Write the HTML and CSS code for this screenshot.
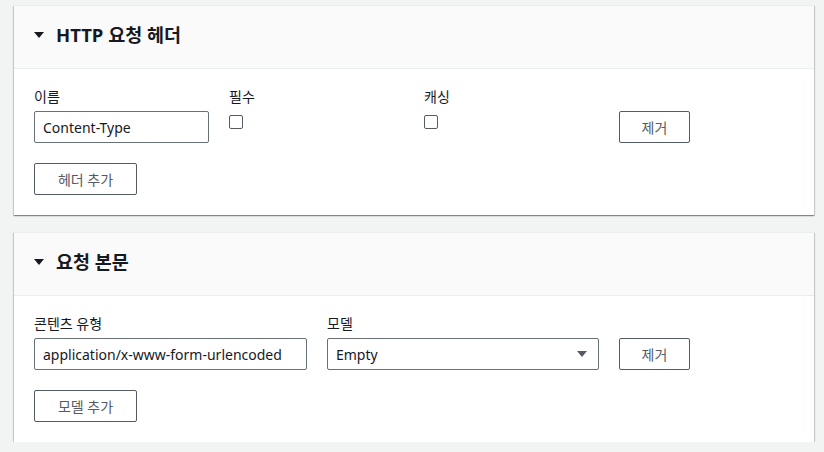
FILE: index.html
```html
<!DOCTYPE html>
<html lang="ko">
<head>
<meta charset="utf-8">
<title>요청 설정</title>
<link rel="stylesheet" href="styles.css">
</head>
<body>
<div class="page">
  <section class="card">
    <div class="card-header">
      <span class="caret"></span>
      <h2 class="card-title">HTTP 요청 헤더</h2>
    </div>
    <div class="card-body">
      <div class="row row-headers">
        <div class="field">
          <label class="label">이름</label>
          <div class="input">Content-Type</div>
        </div>
        <div class="field">
          <label class="label">필수</label>
          <span class="checkbox"></span>
        </div>
        <div class="field">
          <label class="label">캐싱</label>
          <span class="checkbox"></span>
        </div>
        <div class="field field-end">
          <button class="btn btn-remove">제거</button>
        </div>
      </div>
      <div class="actions">
        <button class="btn btn-add">헤더 추가</button>
      </div>
    </div>
  </section>

  <section class="card">
    <div class="card-header">
      <span class="caret"></span>
      <h2 class="card-title">요청 본문</h2>
    </div>
    <div class="card-body">
      <div class="row row-body">
        <div class="field">
          <label class="label">콘텐츠 유형</label>
          <div class="input">application/x-www-form-urlencoded</div>
        </div>
        <div class="field">
          <label class="label">모델</label>
          <div class="input select">
            <span>Empty</span>
            <span class="select-arrow"></span>
          </div>
        </div>
        <div class="field field-end">
          <button class="btn btn-remove">제거</button>
        </div>
      </div>
      <div class="actions">
        <button class="btn btn-add">모델 추가</button>
      </div>
    </div>
  </section>
</div>
</body>
</html>
```

FILE: styles.css
```css
* { box-sizing: border-box; }

html, body {
  margin: 0;
  padding: 0;
  background: #f2f3f3;
}

body {
  font-family: "Noto Sans", "Noto Sans CJK KR", sans-serif;
  font-size: 14px;
  color: #16191f;
}

.page {
  display: flex;
  flex-direction: column;
  gap: 17px;
  padding: 5px 0 0 14px;
  width: 814px;
}

.card {
  background: #ffffff;
  border-top: 1px solid #eaeded;
  box-shadow: 0 1px 1px 0 rgba(0, 28, 36, 0.3),
              1px 1px 1px 0 rgba(0, 28, 36, 0.15),
              -1px 1px 1px 0 rgba(0, 28, 36, 0.15);
}

.card-header {
  display: flex;
  align-items: center;
  gap: 12px;
  background: #fafafa;
  border-bottom: 1px solid #eaeded;
  padding: 15px 20px 20px;
  height: 63px;
}

.caret {
  width: 0;
  height: 0;
  border-left: 5px solid transparent;
  border-right: 5px solid transparent;
  border-top: 6px solid #16191f;
}

.card-title {
  margin: 0;
  font-size: 18.5px;
  font-weight: 700;
  line-height: 26px;
  color: #16191f;
}

.card-body {
  padding: 20px;
  display: flex;
  flex-direction: column;
  gap: 20px;
}

.row {
  display: grid;
  column-gap: 20px;
}

.row-headers { grid-template-columns: 175px 175px 175px 71px; }
.row-body { grid-template-columns: 273px 272px 71px; }

.field {
  display: flex;
  flex-direction: column;
}

.field-end { justify-content: flex-end; }

.label {
  display: block;
  line-height: 15px;
  height: 22px;
  font-size: 14px;
  color: #16191f;
}

.input {
  height: 32px;
  border: 1px solid #687078;
  border-radius: 2px;
  padding: 0 8px;
  display: flex;
  align-items: center;
  background: #fff;
  color: #16191f;
  white-space: nowrap;
}

.select { justify-content: space-between; padding-right: 11px; }

.select-arrow {
  width: 0;
  height: 0;
  border-left: 5px solid transparent;
  border-right: 5px solid transparent;
  border-top: 6px solid #545b64;
}

.checkbox {
  display: block;
  width: 14px;
  height: 14px;
  margin-top: 4px;
  border: 1px solid #545b64;
  border-radius: 2px;
  background: #fff;
}

.actions { display: flex; }

.btn {
  font-family: inherit;
  font-size: 14px;
  color: #545b64;
  background: #fff;
  border: 1px solid #545b64;
  border-radius: 2px;
  height: 32px;
  padding: 0;
  cursor: pointer;
}

.btn-remove { width: 71px; }
.btn-add { width: 103px; }
```
